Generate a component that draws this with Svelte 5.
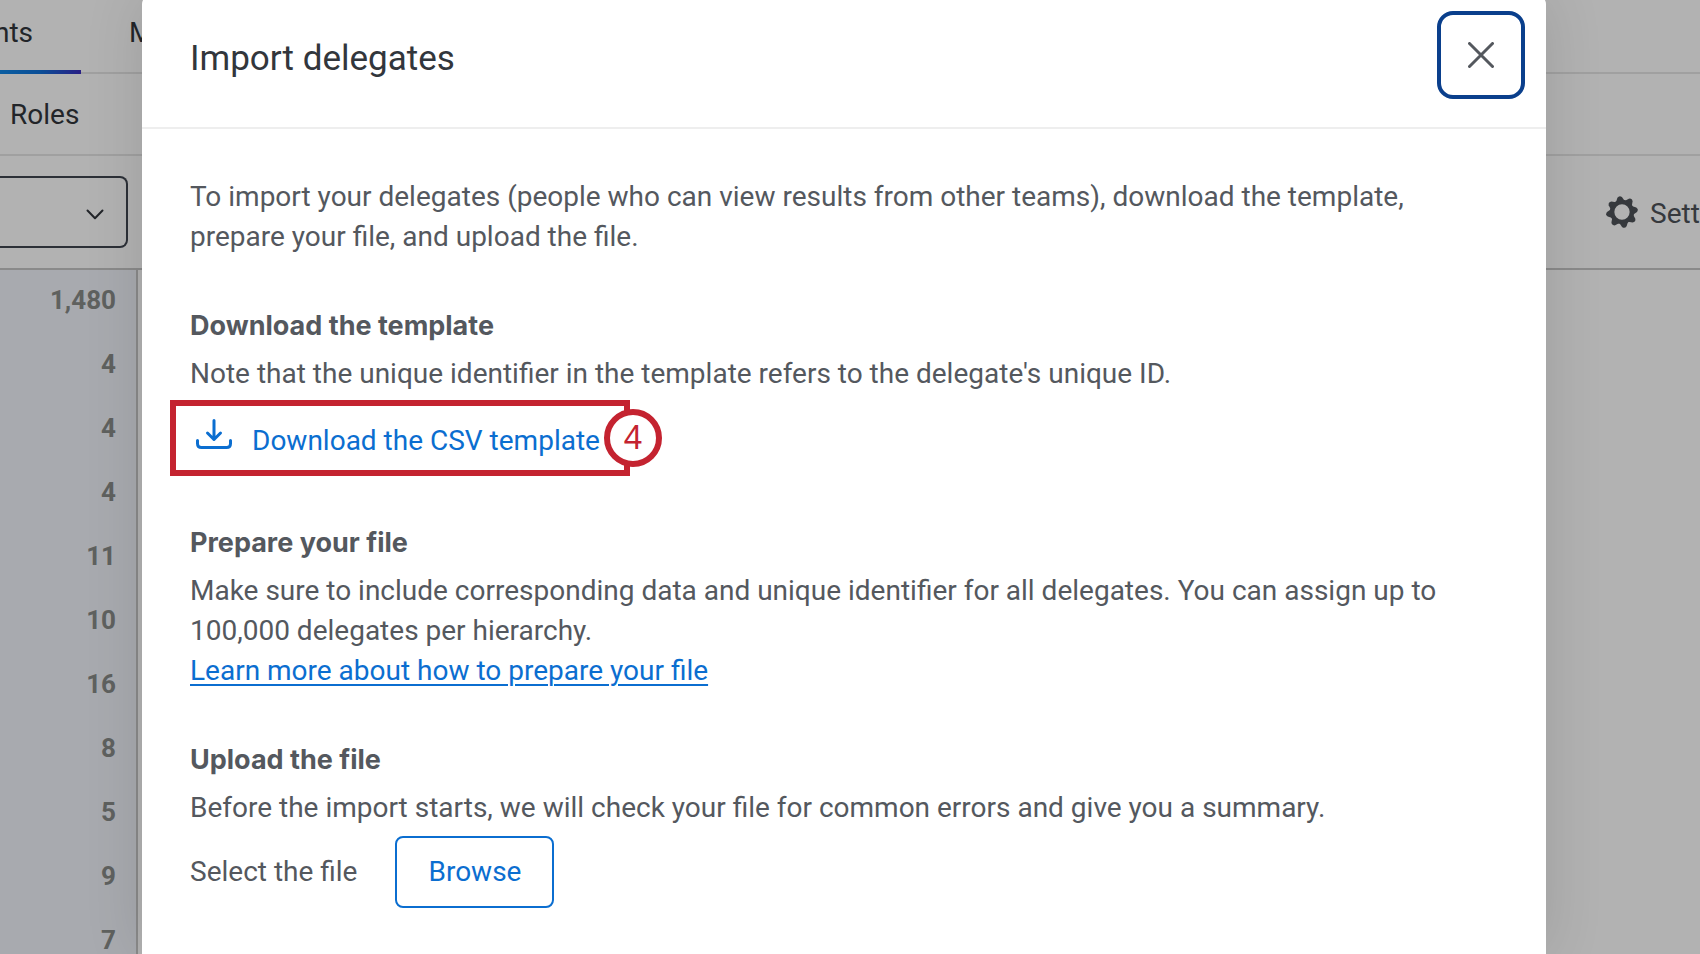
<script>
  const counts = ['1,480', '4', '4', '4', '11', '10', '16', '8', '5', '9', '7'];
  const teeth = [0, 45, 90, 135, 180, 225, 270, 315];
</script>

<div class="app">
  <div class="page">
    <nav class="tabs">
      <a class="tab active" href="#participants">nts</a>
      <a class="tab" href="#messages">M</a>
    </nav>
    <nav class="subtabs"><a href="#roles">Roles</a></nav>
    <div class="toolbar">
      <button class="picker" aria-label="Choose hierarchy">
        <svg width="18" height="11" viewBox="0 0 18 11"><path d="M1.500 1.500 9 9.200l7.500-7.700" /></svg>
      </button>
      <button class="settings">
        <svg width="32" height="32" viewBox="-16 -16 32 32">
          <circle r="9.900" />
          <g transform="rotate(-9)">
            {#each teeth as angle}
              <path d="M-4.400-10.500-2.300-14.800Q0-17.200 2.300-14.800L4.400-10.500Z" transform="rotate({angle})" />
            {/each}
          </g>
        </svg>
        <span>Settings</span>
      </button>
    </div>
    <ul class="counts">
      {#each counts as count}<li>{count}</li>{/each}
    </ul>
  </div>

  <div class="backdrop">
    <div class="modal" role="dialog" aria-modal="true" aria-labelledby="dialog-title">
      <header>
        <h1 id="dialog-title">Import delegates</h1>
        <button class="close" aria-label="Close">
          <svg width="26" height="26" viewBox="0 0 26 26"><path d="M1.500 1.500l23 23M24.500 1.500l-23 23" /></svg>
        </button>
      </header>
      <div class="content">
        <p>To import your delegates (people who can view results from other teams), download the template, prepare your file, and upload the file.</p>
        <section>
          <h2>Download the template</h2>
          <p>Note that the unique identifier in the template refers to the delegate's unique ID.</p>
          <div class="download">
            <a href="#template">
              <svg width="36" height="44" viewBox="0 0 36 44"><path d="M18 1.500v19M11.500 14l6.500 6.500 6.500-6.500M1.500 21.500v3q0 4 4 4h25q4 0 4-4v-3" /></svg>
              <span>Download the CSV template</span>
            </a>
            <div class="callout"><span class="step">4</span></div>
          </div>
        </section>
        <section>
          <h2>Prepare your file</h2>
          <p>Make sure to include corresponding data and unique identifier for all delegates. You can assign up to 100,000 delegates per hierarchy.</p>
          <a class="learn" href="#prepare">Learn more about how to prepare your file</a>
        </section>
        <section>
          <h2>Upload the file</h2>
          <p>Before the import starts, we will check your file for common errors and give you a summary.</p>
          <div class="upload">
            <span id="select-label">Select the file</span>
            <button class="browse" aria-describedby="select-label">Browse</button>
          </div>
        </section>
      </div>
    </div>
  </div>
</div>

<style>
  :global(body) { margin: 0; }
  * { box-sizing: border-box; }
  .app {
    position: relative;
    height: 100vh;
    overflow: hidden;
    background: #fff;
    color: #32363c;
    font: 28px/40px Roboto, sans-serif;
  }
  h1, h2, p, ul { margin: 0; padding: 0; }
  a { color: inherit; text-decoration: none; }
  button { font: inherit; color: inherit; background: none; padding: 0; }
  svg { display: block; flex: none; fill: none; stroke: currentColor; stroke-linecap: round; stroke-linejoin: round; }

  .tabs { display: flex; gap: 48px; height: 74px; border-bottom: 2px solid #e6e6e6; }
  .tab { height: 74px; padding-top: 13px; }
  .tab.active {
    display: flex;
    justify-content: flex-end;
    width: 81px;
    padding-right: 48px;
    border-bottom: 4px solid;
    border-image: linear-gradient(90deg, #1088e8, #1070d8 50%, #3d2cbf) 1;
  }
  .subtabs { height: 82px; padding: 20px 10px; border-bottom: 2px solid #e6e6e6; }
  .subtabs a { display: block; line-height: 42px; }
  .toolbar {
    display: flex;
    justify-content: space-between;
    align-items: flex-start;
    height: 114px;
    padding-top: 20px;
    border-bottom: 2px solid #c6c6c6;
  }
  .picker {
    display: flex;
    align-items: center;
    justify-content: flex-end;
    width: 128px;
    height: 72px;
    padding: 4px 22px 0 0;
    border: 2px solid #3f454f;
    border-left: 0;
    border-radius: 0 8px 8px 0;
  }
  .picker svg { stroke-width: 2; }
  .settings {
    display: flex;
    align-items: center;
    gap: 12px;
    width: 94px;
    height: 72px;
    border: 0;
    color: #4e5258;
  }
  .settings span { padding-top: 4px; }
  .settings circle { stroke-width: 4.5; }
  .settings path { fill: currentColor; stroke: none; }
  .counts {
    width: 138px;
    height: 100vh;
    padding: 1px 20px 0 0;
    border-right: 2px solid #c6c6c6;
    background: #f1f4fb;
    color: #888b88;
    font-size: 26px;
    font-weight: 700;
    line-height: 58px;
    text-align: right;
    list-style: none;
  }
  .counts li { height: 64px; }

  .backdrop {
    position: absolute;
    inset: 0;
    display: flex;
    padding: 0 154px 0 142px;
    background: rgba(0, 0, 0, 0.3);
  }
  .modal {
    flex: 1;
    margin-top: -4px;
    border-radius: 8px 8px 0 0;
    background: #fff;
    color: #54585e;
    box-shadow: 0 0 60px rgba(0, 0, 0, 0.12);
  }
  header {
    display: flex;
    justify-content: space-between;
    align-items: flex-start;
    height: 133px;
    padding: 15px 21px 0 48px;
    border-bottom: 2px solid #eee;
  }
  h1 { padding-top: 24px; color: #32363c; font-size: 35px; font-weight: 400; line-height: 48px; }
  .close {
    display: grid;
    place-items: center;
    width: 88px;
    height: 88px;
    border: 4px solid #0a3f8c;
    border-radius: 16px;
  }
  .close svg { stroke-width: 3; }

  .content { display: flex; flex-direction: column; gap: 49px; padding: 48px; }
  h2 { margin-bottom: 8px; font: 700 27px/40px Inter, sans-serif; }
  .download { position: relative; display: flex; height: 72px; margin-top: 8px; padding: 5px 6px 0; }
  .download a { display: flex; align-items: center; gap: 20px; color: #0b6ed0; }
  .download svg { stroke-width: 3; }
  .callout {
    position: absolute;
    top: -2px;
    left: -20px;
    width: 460px;
    height: 76px;
    border: 6px solid #c42330;
    pointer-events: none;
  }
  .step {
    position: absolute;
    top: 3px;
    right: -38px;
    width: 58px;
    height: 58px;
    border: 6px solid #c42330;
    border-radius: 50%;
    background: #fff;
    color: #c42330;
    font: 32px/44px "Noto Sans", sans-serif;
    text-align: center;
  }
  .learn { color: #0b6ed0; text-decoration: underline; text-decoration-thickness: 2px; text-underline-offset: 4px; }
  .upload { display: flex; align-items: center; gap: 38px; margin-top: 8px; }
  .browse { width: 159px; height: 72px; border: 2px solid #0b6ed0; border-radius: 8px; color: #0b6ed0; }
</style>
